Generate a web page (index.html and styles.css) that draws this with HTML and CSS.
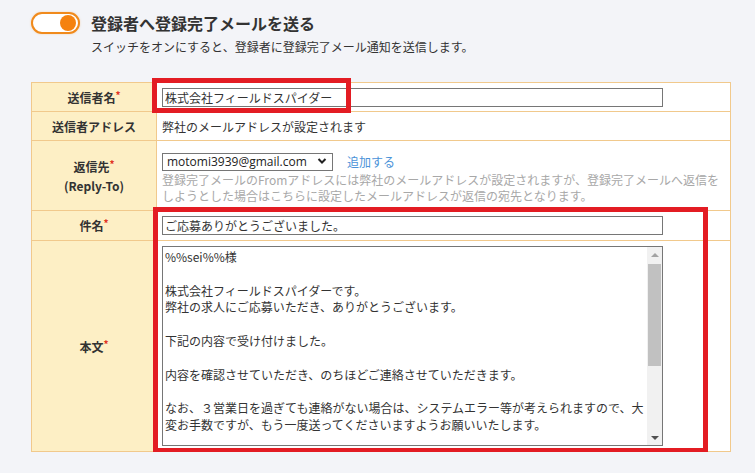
FILE: index.html
```html
<!DOCTYPE html>
<html lang="ja">
<head>
<meta charset="utf-8">
<title>登録完了メール設定</title>
<link rel="stylesheet" href="styles.css">
</head>
<body>
<div class="page">
  <div class="header">
    <div class="toggle"><span class="knob"></span></div>
    <div class="titles">
      <h2 class="title">登録者へ登録完了メールを送る</h2>
      <p class="subtitle">スイッチをオンにすると、登録者に登録完了メール通知を送信します。</p>
    </div>
  </div>

  <div class="form-wrap">
    <div class="form">
      <div class="label"><div>送信者名<span class="req">*</span></div></div>
      <div class="value"><input class="text-input" type="text" value="株式会社フィールドスパイダー"></div>

      <div class="label"><div>送信者アドレス</div></div>
      <div class="value value-mid">弊社のメールアドレスが設定されます</div>

      <div class="label"><div>返信先<span class="req">*</span><br>(Reply-To)</div></div>
      <div class="value value-reply">
        <div class="select-row">
          <div class="select-wrap">
            <select class="select"><option>motomi3939@gmail.com</option></select>
            <svg class="chev" width="10" height="8" viewBox="0 0 10 8"><path d="M1.5 2 L5 5.5 L8.5 2" fill="none" stroke="#222" stroke-width="2"/></svg>
          </div>
          <a class="link" href="#">追加する</a>
        </div>
        <p class="help">登録完了メールのFromアドレスには弊社のメールアドレスが設定されますが、登録完了メールへ返信をしようとした場合はこちらに設定したメールアドレスが返信の宛先となります。</p>
      </div>

      <div class="label"><div>件名<span class="req">*</span></div></div>
      <div class="value"><input class="text-input" type="text" value="ご応募ありがとうございました。"></div>

      <div class="label"><div>本文<span class="req">*</span></div></div>
      <div class="value">
        <div class="area-wrap">
          <textarea class="body-text">%%sei%%様

株式会社フィールドスパイダーです。
弊社の求人にご応募いただき、ありがとうございます。

下記の内容で受け付けました。

内容を確認させていただき、のちほどご連絡させていただきます。

なお、３営業日を過ぎても連絡がない場合は、システムエラー等が考えられますので、大変お手数ですが、もう一度送ってくださいますようお願いいたします。

━━━━━━━━━━━━━━━━━━━━
■応募内容
━━━━━━━━━━━━━━━━━━━━
%%job_content%%

━━━━━━━━━━━━━━━━━━━━
株式会社フィールドスパイダー
━━━━━━━━━━━━━━━━━━━━</textarea>
          <div class="sbar" aria-hidden="true">
            <div class="sbtn"><svg width="8" height="4" viewBox="0 0 8 4"><path d="M0 4 L4 0 L8 4 Z" fill="#a3a3a3"/></svg></div>
            <div class="sthumb"></div>
            <div class="sfill"></div>
            <div class="sbtn"><svg width="8" height="4" viewBox="0 0 8 4"><path d="M0 0 L8 0 L4 4 Z" fill="#505050"/></svg></div>
          </div>
        </div>
      </div>
    </div>
    <div class="mark mark-name"></div>
    <div class="mark mark-body"></div>
  </div>
</div>
</body>
</html>
```

FILE: styles.css
```css
* { box-sizing: border-box; }

html, body {
  margin: 0;
  padding: 0;
  background: #f3f4f8;
}

body {
  font-family: "Noto Sans CJK JP", "Noto Sans", sans-serif;
  color: #333;
  font-size: 12px;
}

.page {
  padding: 12px 24px 0 31px;
  width: 755px;
}

.header {
  display: grid;
  grid-template-columns: 49px 1fr;
  column-gap: 11px;
  align-items: start;
}

.toggle {
  width: 49px;
  height: 22px;
  border: 2px solid #f08a1c;
  border-radius: 11px;
  background: #fff;
  display: flex;
  align-items: center;
  justify-content: flex-end;
  padding-right: 2px;
  box-shadow: 0 0 2px rgba(240, 138, 28, 0.35);
}

.knob {
  width: 16px;
  height: 16px;
  border-radius: 50%;
  background: #f5820f;
}

.title {
  margin: 0;
  font-size: 16px;
  line-height: 22px;
  font-weight: bold;
  color: #333;
}

.subtitle {
  margin: 4px 0 0;
  font-size: 12px;
  line-height: 18px;
  color: #333;
}

.form-wrap {
  position: relative;
  margin-top: 26px;
  width: 700px;
}

.form {
  display: grid;
  grid-template-columns: 125px 574px;
  grid-template-rows: 29px 29px 70px 30px 211px;
  border-top: 1px solid #f1c98c;
  border-left: 1px solid #f1c98c;
  width: 700px;
}

.label {
  background: #fdefc5;
  border-right: 1px solid #f1c98c;
  border-bottom: 1px solid #f1c98c;
  display: flex;
  align-items: center;
  justify-content: center;
  text-align: center;
  font-weight: bold;
  font-size: 12px;
  line-height: 19px;
  color: #333;
}

.req {
  color: #e0341e;
  font-size: 10px;
  vertical-align: top;
  line-height: 14px;
}

.value {
  background: #fff;
  border-right: 1px solid #f1c98c;
  border-bottom: 1px solid #f1c98c;
  padding: 5px 5px 0;
}

.value-mid {
  display: flex;
  align-items: center;
  padding-top: 0;
  font-size: 12px;
}

.text-input {
  display: block;
  width: 501px;
  height: 19px;
  margin: 0;
  border: 1px solid #767676;
  border-radius: 0;
  padding: 0 2px;
  font-family: "Noto Sans CJK JP", "Noto Sans", sans-serif;
  font-size: 12px;
  color: #333;
  background: #fff;
  outline: none;
}

.value-reply {
  padding-top: 11px;
}

.select-row {
  display: flex;
  align-items: center;
  height: 18px;
}

.select-wrap {
  position: relative;
  width: 171px;
  height: 18px;
}

.select {
  appearance: none;
  -webkit-appearance: none;
  width: 171px;
  height: 18px;
  margin: 0;
  border: 1px solid #767676;
  border-radius: 0;
  padding: 0 0 0 4px;
  background: #fff;
  font-family: "Open Sans", "Noto Sans", sans-serif;
  font-size: 12px;
  line-height: 16px;
  color: #222;
}

.chev {
  position: absolute;
  right: 6px;
  top: 5px;
  pointer-events: none;
}

.link {
  margin-left: 14px;
  color: #4a92d8;
  text-decoration: none;
  font-size: 12px;
}

.help {
  margin: 2px 0 0;
  font-size: 12px;
  line-height: 16px;
  color: #a8a8a8;
}

.area-wrap {
  position: relative;
  width: 501px;
  height: 200px;
}

.body-text {
  display: block;
  width: 501px;
  height: 200px;
  margin: 0;
  border: 1px solid #767676;
  border-radius: 0;
  padding: 2px 17px 2px 2px;
  font-family: "Noto Sans CJK JP", "Noto Sans", sans-serif;
  font-size: 12px;
  line-height: 16.8px;
  color: #333;
  resize: none;
  overflow: hidden;
  outline: none;
  background: #fff;
}

.sbar {
  position: absolute;
  top: 1px;
  right: 1px;
  bottom: 1px;
  width: 15px;
  background: #f1f1f1;
  display: flex;
  flex-direction: column;
}

.sbtn {
  height: 15px;
  flex: none;
  display: flex;
  align-items: center;
  justify-content: center;
}

.sthumb {
  height: 102px;
  margin: 2px 1px 0;
  background: #c1c1c1;
  flex: none;
}

.sfill {
  flex: 1;
}

.mark {
  position: absolute;
  border: 5px solid #e31c23;
  pointer-events: none;
}

.mark-name {
  left: 121px;
  top: -4px;
  width: 199px;
  height: 35px;
}

.mark-body {
  left: 122px;
  top: 125px;
  width: 555px;
  height: 246px;
}
```
